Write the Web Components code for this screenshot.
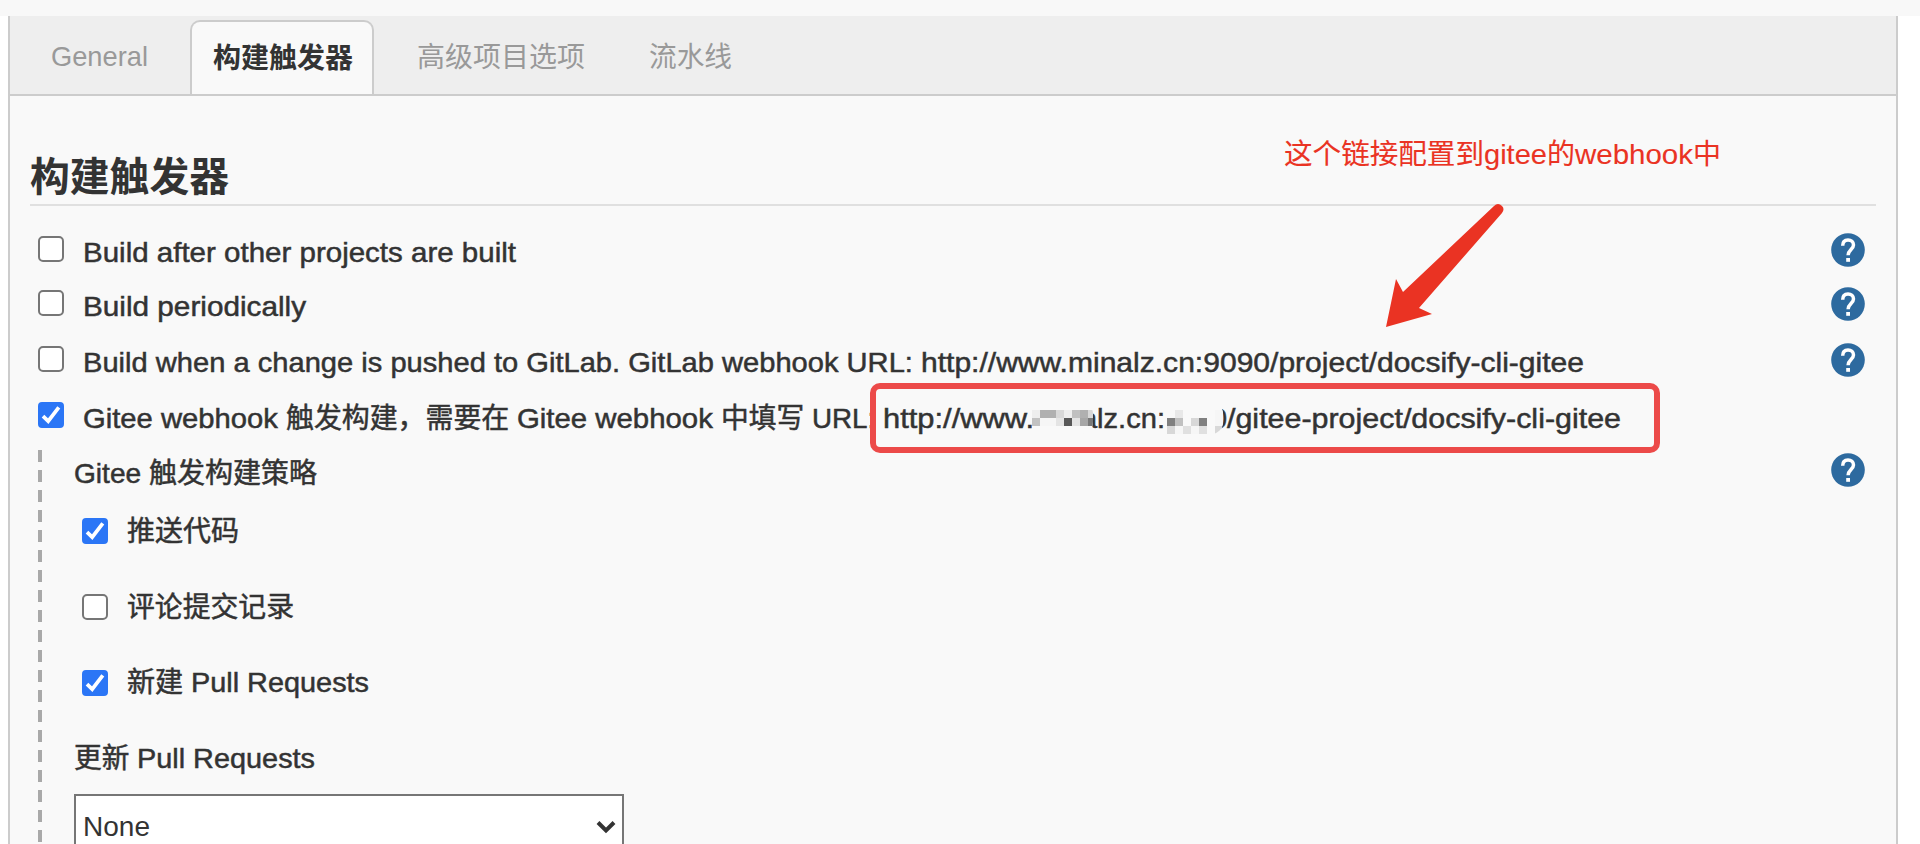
<!DOCTYPE html>
<html lang="zh-CN">
<head>
<meta charset="utf-8">
<title>构建触发器</title>
<style>
html, body { margin: 0; height: 844px; overflow: hidden; background: #fff; }
body { font-family: "Liberation Sans", "Noto Sans CJK SC", sans-serif; font-size: 28px; color: #333; }
</style>
</head>
<body>
<config-page></config-page>
<script>
const define = (name, html, setup) => {
  const tpl = document.createElement('template');
  tpl.innerHTML = html.trim();
  customElements.define(name, class extends HTMLElement {
    constructor() {
      super();
      this.attachShadow({ mode: 'open' }).append(tpl.content.cloneNode(true));
    }
    connectedCallback() { if (setup) setup(this, this.shadowRoot); }
  });
};

/* A run of text stretched or condensed so that it fills the width given in px. */
define('fit-text', `
<style>
:host { display: inline-block; white-space: pre; -webkit-text-stroke: var(--weight, .5px) currentColor; }
span { display: inline-block; transform-origin: 0 50%; }
</style><span><slot></slot></span>`, (el, root) => {
  const target = +el.getAttribute('w');
  const span = root.querySelector('span');
  span.style.transform = 'none';
  const natural = span.getBoundingClientRect().width;
  span.style.transform = 'scaleX(' + target / natural + ')';
  el.style.width = target + 'px';
});

define('help-icon', `
<style>:host { display: block; width: 34px; height: 34px; flex: none; margin-top: -3px; } svg { display: block; }</style>
<svg width="34" height="34" viewBox="0 0 34 34">
<circle cx="17" cy="17" r="16.8" fill="#2d6a9f"/>
<path d="M11.700 12.700C11.700 8.800 14 6.900 17 6.900c3.200 0 5.500 2 5.500 5 0 4.300-5.400 4.900-5.400 10.300" fill="none" stroke="#fff" stroke-width="3.500"/>
<rect x="15.200" y="25" width="3.800" height="3.800" fill="#fff"/>
</svg>`);

define('check-box', `
<style>
:host { display: block; box-sizing: border-box; width: 26px; height: 26px; flex: none; border: 2px solid #767676; border-radius: 5px; background: #fff; }
svg { display: none; margin: -2px; }
:host([checked]) { border-color: #2b76f6; background: #2b76f6; border-radius: 4px; }
:host([checked]) svg { display: block; }
</style>
<svg width="26" height="26" viewBox="0 0 26 26"><path d="M5 14.200 10.200 19.200 20.800 5.300" fill="none" stroke="#fff" stroke-width="3.700"/></svg>`);

define('tab-item', `
<style>
:host { display: block; box-sizing: border-box; height: 74px; color: #999; line-height: 34px; --weight: 0px; padding-top: 20px; }
:host([active]) { color: #333; font-weight: 700; border: 2px solid #ccc; border-bottom: 0; border-radius: 10px 10px 0 0; background: #f9f9f9; padding: 20px 19px 0 21px; }
</style><slot></slot>`);

define('tab-bar', `
<style>
:host { display: flex; box-sizing: border-box; height: 80px; padding: 4px 0 0 41px; background: #eee; border-bottom: 2px solid #ccc; }
</style><slot></slot>`);

define('trigger-row', `
<style>
:host { display: flex; box-sizing: border-box; height: var(--h, 55px); padding: 0 11px 0 8px; }
.label { flex: 1; padding-left: 19px; line-height: 34px; white-space: nowrap; display: flex; }
.label ::slotted(*) { flex: none; }
</style>
<slot name="box"></slot><div class="label"><slot></slot></div><slot name="help"></slot>`);

define('pixel-mask', `
<style>
:host { display: block; position: absolute; border-radius: 5px; overflow: hidden; }
svg { display: block; }
</style><svg><g></g></svg>`, (el, root) => {
  const rows = el.getAttribute('cells').split('/').map(r => r.split(','));
  const h = +el.getAttribute('cell') , svg = root.querySelector('svg'), g = root.querySelector('g');
  const w = rows[0].length * h;
  svg.setAttribute('width', w); svg.setAttribute('height', rows.length * h);
  svg.setAttribute('shape-rendering', 'crispEdges');
  g.innerHTML = rows.map((r, y) => r.map((c, x) => `<rect x="${x*h}" y="${y*h}" width="${h}" height="${h}" fill="#${c}${c}${c}"/>`).join('')).join('');
});

define('webhook-url', `
<style>
:host { display: block; position: relative; height: 34px; }
.frame { position: absolute; left: -13px; top: -19px; width: 790px; height: 70px; box-sizing: border-box; border: 6px solid #ec4a49; border-radius: 10px; }
.m1 { left: 149px; top: 0; padding-top: 8px; padding-bottom: 8px; background: #f9f9f9; border-radius: 0 12px 12px 0; width: 61px; }
.m2 { left: 284px; top: 0; padding-top: 8px; background: #f9f9f9; border-radius: 0 12px 12px 0; }
</style>
<slot></slot>
<pixel-mask class="m1" cell="8" cells="ee,b0,b0,d8,ee,c0,b0,d8/c2,f6,f6,e4,58,e4,a6,78"></pixel-mask>
<pixel-mask class="m2" cell="8" cells="f9,e8,f9,f9,f9,f9,f6/80,c0,f9,d8,80,f9,f6/d8,f6,e0,f6,e0,f9,d8"></pixel-mask>
<div class="frame"></div>`);

define('option-row', `
<style>
:host { display: flex; align-items: center; height: 76px; padding-left: 8px; gap: 19px; line-height: 34px; }
::slotted(fit-text) { padding-top: 1px; }
</style><slot></slot>`);

define('select-box', `
<style>
:host { display: flex; box-sizing: border-box; width: 550px; height: 64px; border: 2px solid #767676; background: #fff; align-items: center; justify-content: space-between; padding: 1px 6px 0 7px; --weight: 0px; }
</style><slot></slot>
<svg width="20" height="14" viewBox="0 0 20 14"><path d="M2 2.500 10 10.500 18 2.500" fill="none" stroke="#333" stroke-width="4"/></svg>`);

define('trigger-details', `
<style>
:host { display: flex; height: 394px; margin-left: 8px; gap: 32px; }
.rule { width: 4px; flex: none; background: repeating-linear-gradient(#a9a9a9 0 12px, transparent 12px 20px); }
.body { flex: 1; }
.head { display: flex; justify-content: space-between; padding: 6px 11px 0 0; box-sizing: border-box; line-height: 35px; height: 43px; }
.sub { line-height: 34px; height: 52px; padding-top: 21px; }
</style>
<div class="rule"></div>
<div class="body">
<div class="head"><div><fit-text w="75">Gitee </fit-text><fit-text w="168">触发构建策略</fit-text></div><help-icon></help-icon></div>
<option-row><check-box checked></check-box><fit-text w="112">推送代码</fit-text></option-row>
<option-row><check-box></check-box><fit-text w="167">评论提交记录</fit-text></option-row>
<option-row><check-box checked></check-box><div><fit-text w="64">新建 </fit-text><fit-text w="178">Pull Requests</fit-text></div></option-row>
<div class="sub"><fit-text w="63">更新 </fit-text><fit-text w="178">Pull Requests</fit-text></div>
<select-box><fit-text w="67">None</fit-text></select-box>
</div>`);

define('red-note', `
<style>
:host { display: block; position: absolute; left: 1284px; top: 135px; color: #ea3323; line-height: 40px; --weight: .1px; }
svg { position: absolute; left: 96px; top: 63px; }
</style>
<fit-text w="200">这个链接配置到</fit-text><fit-text w="63">gitee</fit-text><fit-text w="28">的</fit-text><fit-text w="118">webhook</fit-text><fit-text w="28">中</fit-text>
<svg width="130" height="136" viewBox="1380 198 130 136"><path d="M1386 327 1396 279 1403 292 1494 206Q1498 202 1502 206 1505 209 1502 213L1419 308 1432 314Z" fill="#ea3323"/></svg>`);

define('config-page', `
<style>
:host { display: block; box-sizing: border-box; height: 844px; overflow: hidden; background: linear-gradient(#f8f8f8 0 16px, #fff 16px); padding: 16px 22px 0 8px; }
main { box-sizing: border-box; height: 828px; border: solid #ccc; border-width: 0 2px; background: #f9f9f9; }
section { padding: 0 20px; }
h2 { margin: 0 0 30px; box-sizing: border-box; height: 110px; padding-top: 54px; font-size: 40px; line-height: 54px; border-bottom: 2px solid #e0e0e0; --weight: 0px; }
</style>
<main>
<tab-bar>
<tab-item style="width:139px"><fit-text w="97">General</fit-text></tab-item>
<tab-item active><fit-text w="140">构建触发器</fit-text></tab-item>
<tab-item style="padding:21px 0 0 43px;width:232px"><fit-text w="168">高级项目选项</fit-text></tab-item>
<tab-item style="padding:21px 0 0 43px"><fit-text w="83">流水线</fit-text></tab-item>
</tab-bar>
<section>
<h2><fit-text w="199">构建触发器</fit-text></h2>
<trigger-row style="--h:54px"><check-box slot="box"></check-box><fit-text w="433">Build after other projects are built</fit-text><help-icon slot="help"></help-icon></trigger-row>
<trigger-row style="--h:56px"><check-box slot="box"></check-box><fit-text w="223">Build periodically</fit-text><help-icon slot="help"></help-icon></trigger-row>
<trigger-row style="--h:56px"><check-box slot="box"></check-box><fit-text w="838">Build when a change is pushed to GitLab. GitLab webhook URL: </fit-text><fit-text w="663">http://www.minalz.cn:9090/project/docsify-cli-gitee</fit-text><help-icon slot="help"></help-icon></trigger-row>
<trigger-row style="--h:48px"><check-box slot="box" checked></check-box><fit-text w="203">Gitee webhook </fit-text><fit-text w="231">触发构建，需要在 </fit-text><fit-text w="204">Gitee webhook </fit-text><fit-text w="91">中填写 </fit-text><fit-text w="71">URL: </fit-text><webhook-url><fit-text w="151">http://www.</fit-text><fit-text w="131">minalz.cn:</fit-text><fit-text w="59" style="margin-left:3px">9090</fit-text><fit-text w="394">/gitee-project/docsify-cli-gitee</fit-text></webhook-url></trigger-row>
<trigger-details></trigger-details>
</section>
</main>
<red-note></red-note>`);
</script>
</body>
</html>
